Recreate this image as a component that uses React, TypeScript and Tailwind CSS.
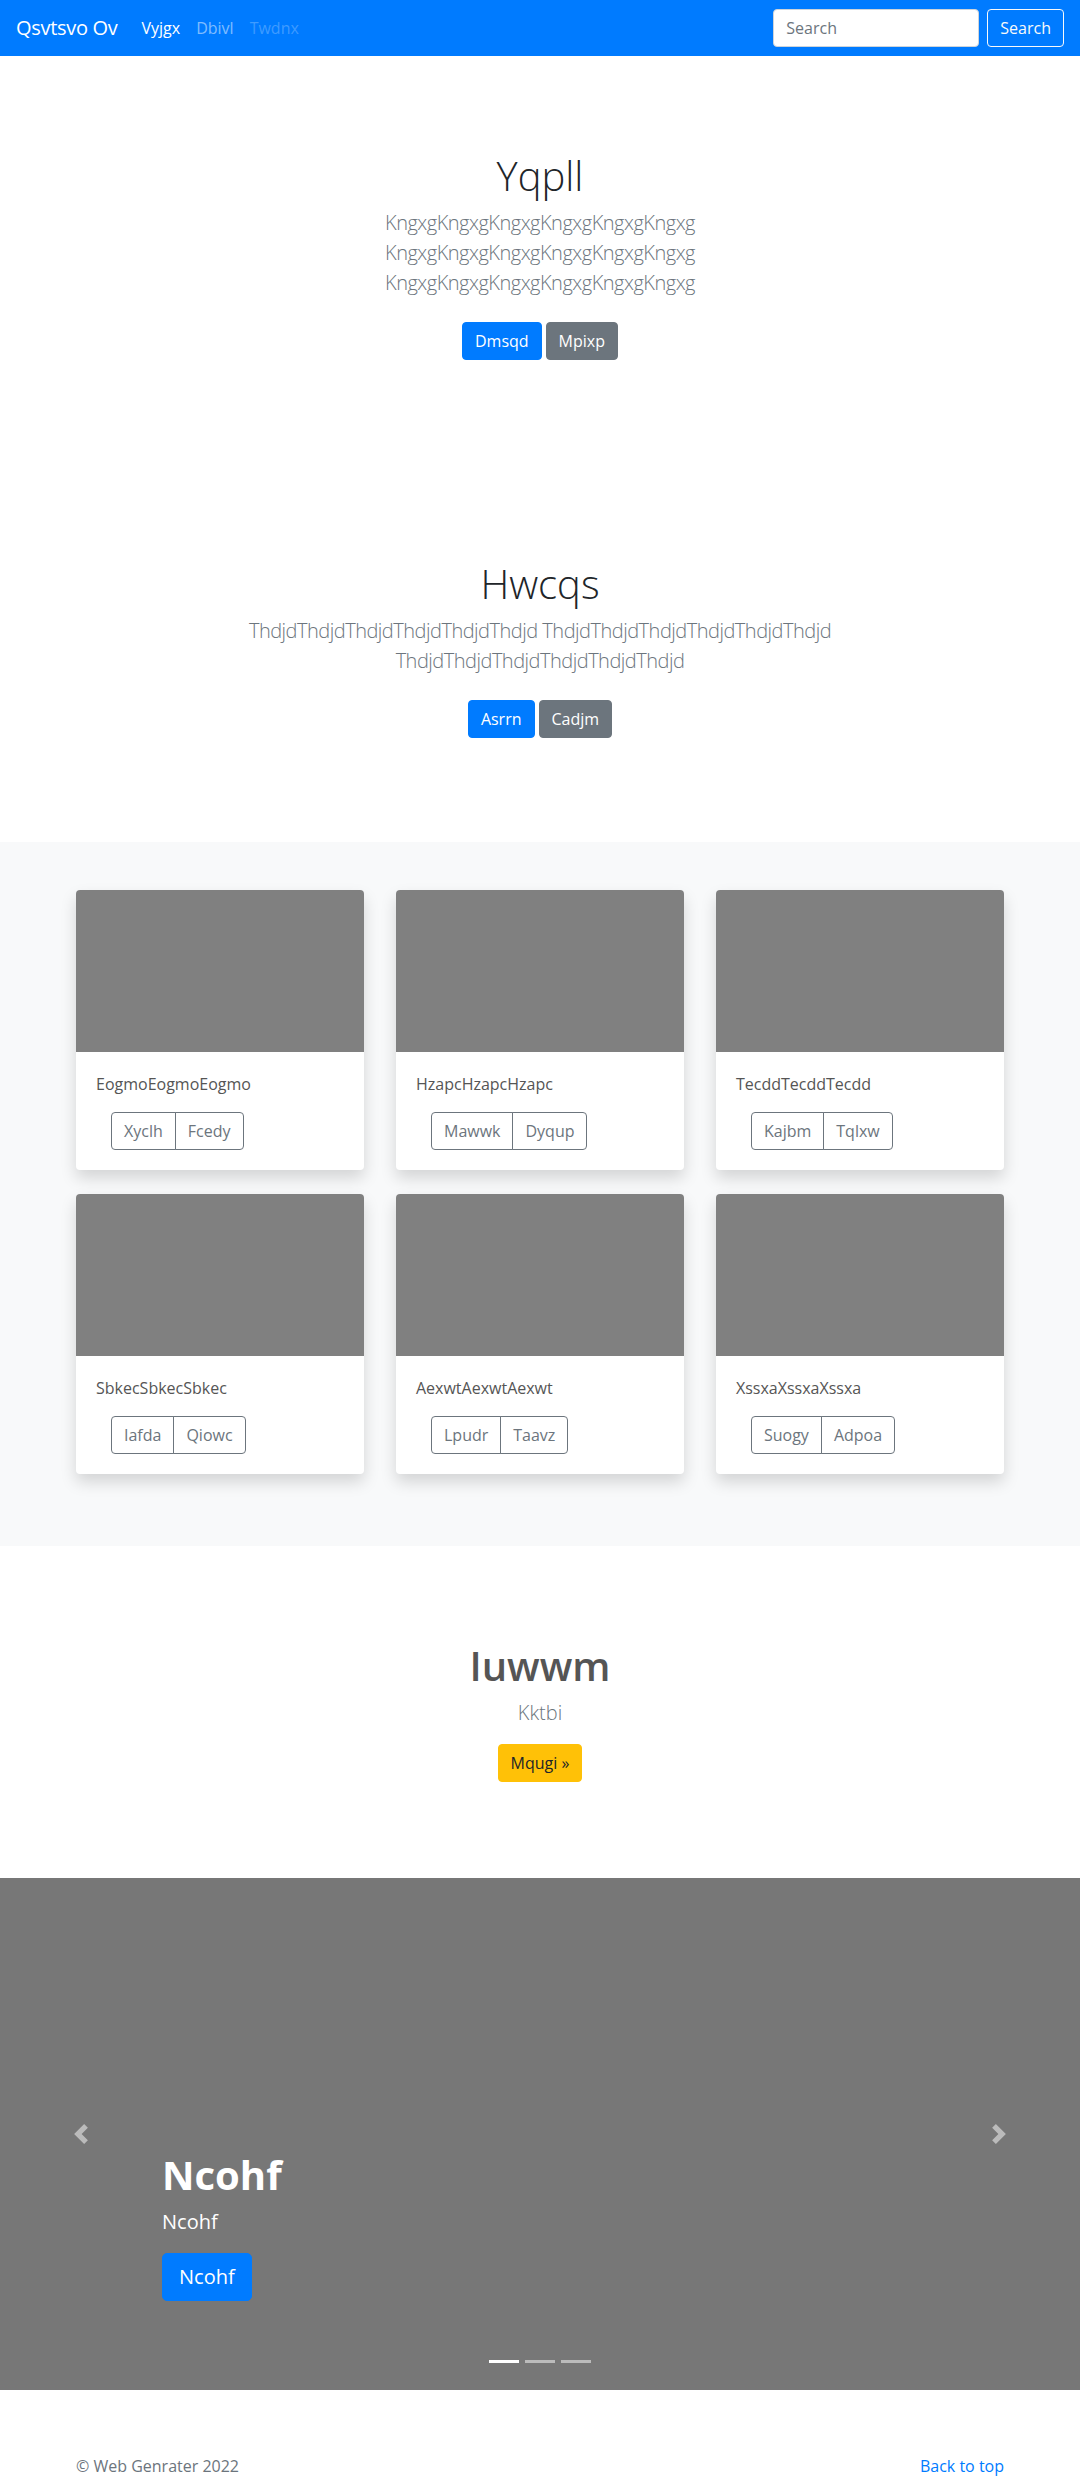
import React from "react";

const cards = [
  { title: "EogmoEogmoEogmo", a: "Xyclh", b: "Fcedy" },
  { title: "HzapcHzapcHzapc", a: "Mawwk", b: "Dyqup" },
  { title: "TecddTecddTecdd", a: "Kajbm", b: "Tqlxw" },
  { title: "SbkecSbkecSbkec", a: "Iafda", b: "Qiowc" },
  { title: "AexwtAexwtAexwt", a: "Lpudr", b: "Taavz" },
  { title: "XssxaXssxaXssxa", a: "Suogy", b: "Adpoa" },
];

function Hero({ title, lines, first, second }: { title: string; lines: string[]; first: string; second: string }) {
  return (
    <section className="py-24 text-center">
      <div className="w-[960px] mx-auto px-4">
        <h1 className="text-[40px] font-light leading-[48px] mb-2 text-[#212529]">{title}</h1>
        <p className="text-[20px] font-light leading-[30px] tracking-[-0.5px] text-[#6c757d] mb-4">
          {lines.map((l, i) => (
            <React.Fragment key={i}>
              {l}
              {i < lines.length - 1 && <br />}
            </React.Fragment>
          ))}
        </p>
        <div className="flex justify-center gap-1 py-2">
          <a href="#" className="h-[38px] px-3 leading-[36px] rounded border border-[#007bff] bg-[#007bff] text-white">{first}</a>
          <a href="#" className="h-[38px] px-3 leading-[36px] rounded border border-[#6c757d] bg-[#6c757d] text-white">{second}</a>
        </div>
      </div>
    </section>
  );
}

function Chevron({ dir }: { dir: "prev" | "next" }) {
  return (
    <svg viewBox="0 0 8 8" className="w-5 h-5 fill-white opacity-50">
      {dir === "prev" ? (
        <path d="M5.25 0l-4 4 4 4 1.5-1.5-2.5-2.5 2.5-2.5-1.5-1.5z" />
      ) : (
        <path d="M2.75 0l-1.5 1.5 2.5 2.5-2.5 2.5 1.5 1.5 4-4-4-4z" />
      )}
    </svg>
  );
}

export default function App() {
  return (
    <div className="[font-family:'Open_Sans',sans-serif] text-base text-[#212529] bg-white">
      <nav className="h-14 bg-[#007bff] flex items-center px-4">
        <a href="#" className="text-white text-[20px] tracking-[-0.3px] mr-4">Qsvtsvo Ov</a>
        <a href="#" className="px-2 text-white">Vyjgx</a>
        <a href="#" className="px-2 text-white/50">Dbivl</a>
        <span className="px-2 text-white/25">Twdnx</span>
        <div className="ml-auto flex items-center">
          <input
            placeholder="Search"
            className="h-[38px] w-[206px] px-3 rounded bg-white border border-[#ced4da] text-[#495057] placeholder:text-[#6c757d] outline-none"
          />
          <button className="ml-2 h-[38px] px-3 rounded border border-[#f8f9fa] text-[#f8f9fa]">Search</button>
        </div>
      </nav>

      <Hero
        title="Yqpll"
        lines={[
          "KngxgKngxgKngxgKngxgKngxgKngxg",
          "KngxgKngxgKngxgKngxgKngxgKngxg",
          "KngxgKngxgKngxgKngxgKngxgKngxg",
        ]}
        first="Dmsqd"
        second="Mpixp"
      />
      <Hero
        title="Hwcqs"
        lines={[
          "ThdjdThdjdThdjdThdjdThdjdThdjd ThdjdThdjdThdjdThdjdThdjdThdjd",
          "ThdjdThdjdThdjdThdjdThdjdThdjd",
        ]}
        first="Asrrn"
        second="Cadjm"
      />

      <section className="bg-[#f8f9fa] py-12">
        <div className="w-[960px] mx-auto px-4">
          <div className="-mx-4 flex flex-wrap">
            {cards.map((c) => (
              <div key={c.title} className="w-1/3 px-4 mb-6">
                <div className="bg-white rounded shadow-[0_8px_16px_rgba(0,0,0,0.15)] overflow-hidden">
                  <div className="h-[162px] bg-[#808080]" />
                  <div className="p-5">
                    <p className="leading-6 mb-4 text-[#555]">{c.title}</p>
                    <div className="ml-[15px] inline-flex">
                      <button className="h-[38px] px-3 border border-[#6c757d] text-[#6c757d] rounded-l">{c.a}</button>
                      <button className="h-[38px] px-3 -ml-px border border-[#6c757d] text-[#6c757d] rounded-r">{c.b}</button>
                    </div>
                  </div>
                </div>
              </div>
            ))}
          </div>
        </div>
      </section>

      <section className="py-24 text-center">
        <h2 className="text-[40px] font-semibold leading-[48px] mb-2 text-[#555]">Iuwwm</h2>
        <p className="text-[20px] font-light leading-[30px] text-[#6c757d] mb-4">Kktbi</p>
        <a href="#" className="inline-block h-[38px] px-3 leading-[36px] rounded border border-[#ffc107] bg-[#ffc107] text-[#212529]">
          Mqugi »
        </a>
      </section>

      <section className="relative h-[512px] bg-[#777]">
        <a href="#" className="absolute left-0 top-0 bottom-0 w-[15%] flex items-center justify-center">
          <Chevron dir="prev" />
        </a>
        <a href="#" className="absolute right-0 top-0 bottom-0 w-[15%] flex items-center justify-center">
          <Chevron dir="next" />
        </a>
        <div className="absolute left-[15%] right-[15%] bottom-[89px] text-white text-left">
          <h1 className="text-[40px] font-bold leading-[48px] mb-2">Ncohf</h1>
          <p className="text-[20px] leading-[30px] mb-4">Ncohf</p>
          <a href="#" className="inline-block h-12 px-4 leading-[46px] text-[20px] rounded-[5px] border border-[#007bff] bg-[#007bff] text-white">
            Ncohf
          </a>
        </div>
        <div className="absolute bottom-[27px] left-0 right-0 flex justify-center gap-1.5">
          <span className="w-[30px] h-[3px] bg-white" />
          <span className="w-[30px] h-[3px] bg-white/50" />
          <span className="w-[30px] h-[3px] bg-white/50" />
        </div>
      </section>

      <footer className="pt-16 pb-16 text-[#6c757d]">
        <div className="w-[960px] mx-auto px-4 flex justify-between">
          <p>© Web Genrater 2022</p>
          <a href="#" className="text-[#007bff]">Back to top</a>
        </div>
      </footer>
    </div>
  );
}
